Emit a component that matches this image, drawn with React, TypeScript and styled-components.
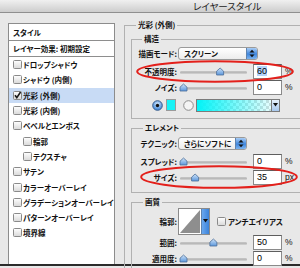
import React from 'react'
import styled, { createGlobalStyle } from 'styled-components'

const GlobalStyle = createGlobalStyle`
  html, body {
    margin: 0;
    padding: 0;
  }
  body {
    width: 300px;
    height: 268px;
    overflow: hidden;
    background: #e8e8e8;
    font-family: "Noto Sans CJK JP", "Liberation Sans", sans-serif;
    font-size: 7.5px;
    font-feature-settings: "palt";
    color: #111;
  }
`

const effects = [
  { name: 'ドロップシャドウ', indent: 0 },
  { name: 'シャドウ (内側)', indent: 0 },
  { name: '光彩 (外側)', indent: 0, checked: true },
  { name: '光彩 (内側)', indent: 0 },
  { name: 'ベベルとエンボス', indent: 0 },
  { name: '輪郭', indent: 10 },
  { name: 'テクスチャ', indent: 10 },
  { name: 'サテン', indent: 0 },
  { name: 'カラーオーバーレイ', indent: 0 },
  { name: 'グラデーションオーバーレイ', indent: 0 },
  { name: 'パターンオーバーレイ', indent: 0 },
  { name: '境界線', indent: 0 },
]

const CheckBox: React.FC<{ checked?: boolean }> = ({ checked }) => (
  <svg width="9" height="9" viewBox="0 0 9 9">
    <defs>
      <linearGradient id="cbg" x1="0" y1="0" x2="0" y2="1">
        <stop offset="0" stopColor="#ffffff" />
        <stop offset="1" stopColor="#d8d8d8" />
      </linearGradient>
    </defs>
    <rect x="0.5" y="0.5" width="8" height="8" rx="1" fill="url(#cbg)" stroke="#8a8a8a" />
    {checked && <path d="M2 4.2 L3.8 6.6 L7.6 1" fill="none" stroke="#1a1a1a" strokeWidth="1.6" />}
  </svg>
)

// pos: 0..1 along the track
const Slider: React.FC<{ pos: number }> = ({ pos }) => {
  const x = 1 + pos * 61
  return (
    <svg width="70" height="9" viewBox="0 0 70 9">
      <defs>
        <linearGradient id="thumb" x1="0" y1="0" x2="0" y2="1">
          <stop offset="0" stopColor="#cfe3f8" />
          <stop offset="1" stopColor="#5b97dc" />
        </linearGradient>
      </defs>
      <rect x="1" y="4.5" width="67" height="2" rx="1" fill="#9c9c9c" />
      <rect x="1" y="5.5" width="67" height="1" fill="#d6d6d6" />
      <polygon
        points={`${x},8 ${x},4.2 ${x + 3.5},1 ${x + 7},4.2 ${x + 7},8`}
        fill="url(#thumb)"
        stroke="#4b6d98"
        strokeWidth="0.8"
      />
    </svg>
  )
}

const Radio: React.FC<{ on?: boolean }> = ({ on }) => (
  <svg width="11" height="11" viewBox="0 0 11 11">
    <defs>
      <radialGradient id="rb" cx="0.5" cy="0.35" r="0.6">
        <stop offset="0" stopColor="#d6e8fb" />
        <stop offset="1" stopColor="#3f86d8" />
      </radialGradient>
    </defs>
    <circle cx="5.5" cy="5.5" r="4.8" fill={on ? 'url(#rb)' : '#f4f4f4'} stroke={on ? '#3a5e8c' : '#8d8d8d'} />
    {on && <circle cx="5.5" cy="5.5" r="1.7" fill="#111" />}
  </svg>
)

const Stepper = () => (
  <StepperBox>
    <svg width="6" height="9" viewBox="0 0 6 9">
      <polygon points="0.5,3.5 3,0.8 5.5,3.5" fill="#111" />
      <polygon points="0.5,5.5 3,8.2 5.5,5.5" fill="#111" />
    </svg>
  </StepperBox>
)

const DownArrow = () => (
  <svg width="5" height="4" viewBox="0 0 5 4">
    <polygon points="0,0 5,0 2.5,3.5" fill="#111" />
  </svg>
)

const Ellipse: React.FC<{ left: number; top: number; w: number; h: number }> = ({ left, top, w, h }) => (
  <Mark style={{ left, top }} width={w} height={h} viewBox={`0 0 ${w} ${h}`}>
    <ellipse cx={w / 2} cy={h / 2} rx={w / 2 - 1.2} ry={h / 2 - 1.2} fill="none" stroke="#e3201b" strokeWidth="2" />
  </Mark>
)

const SliderRow: React.FC<{ label: string; value: number; pos: number; unit: string; selected?: boolean }> = ({
  label,
  value,
  pos,
  unit,
  selected,
}) => (
  <Row $h={16}>
    <Label>{label}</Label>
    <SliderWrap>
      <Slider pos={pos} />
    </SliderWrap>
    <Field>{selected ? <Sel>{value}</Sel> : value}</Field>
    <Unit>{unit}</Unit>
  </Row>
)

export default function App() {
  return (
    <Window>
      <GlobalStyle />
      <TitleBar>レイヤースタイル</TitleBar>
      <Main>
        <StyleList>
          <ListHeader>スタイル</ListHeader>
          <ListHeader $h={16}>レイヤー効果: 初期設定</ListHeader>
          {effects.map((e) => (
            <ListItem key={e.name} $indent={e.indent} $selected={!!e.checked}>
              <CheckBox checked={e.checked} />
              <span>{e.name}</span>
            </ListItem>
          ))}
        </StyleList>

        <Outer>
          <Caption $ml={5}>光彩 (外側)</Caption>

          <Group>
            <Caption $ml={10}>構造</Caption>
            <Rows $pt={2} $pb={6}>
              <Row $h={14}>
                <Label>描画モード:</Label>
                <Select $w={80}>
                  <span>スクリーン</span>
                  <Stepper />
                </Select>
              </Row>
              <Gap $h={3} />
              <SliderRow label="不透明度:" value={60} pos={0.6} unit="%" selected />
              <SliderRow label="ノイズ:" value={0} pos={0} unit="%" />
              <Gap $h={3} />
              <Row $h={14}>
                <ColorPick>
                  <Radio on />
                  <Swatch />
                  <Radio />
                  <GradientBar>
                    <GradientArrow>
                      <DownArrow />
                    </GradientArrow>
                  </GradientBar>
                </ColorPick>
              </Row>
            </Rows>
          </Group>

          <Group>
            <Caption $ml={11}>エレメント</Caption>
            <Rows $pt={3} $pb={7}>
              <Row $h={14}>
                <Label>テクニック:</Label>
                <Select $w={69}>
                  <span>さらにソフトに</span>
                  <Stepper />
                </Select>
              </Row>
              <Gap $h={3} />
              <SliderRow label="スプレッド:" value={0} pos={0} unit="%" />
              <SliderRow label="サイズ:" value={35} pos={0.19} unit="px" />
            </Rows>
          </Group>

          <Group>
            <Caption $ml={11}>画質</Caption>
            <Rows $pt={1} $pb={4}>
              <Row $h={26}>
                <Label>輪郭:</Label>
                <Contour>
                  <svg width="22" height="25" viewBox="0 0 22 25">
                    <polygon points="1,24 21,1 21,24" fill="#8e8e8e" />
                  </svg>
                  <ContourStrip>
                    <DownArrow />
                  </ContourStrip>
                </Contour>
                <AntiAlias>
                  <CheckBox />
                  <span>アンチエイリアス</span>
                </AntiAlias>
              </Row>
              <SliderRow label="範囲:" value={50} pos={0.49} unit="%" />
              <SliderRow label="適用度:" value={0} pos={0} unit="%" />
            </Rows>
          </Group>
        </Outer>
      </Main>
      <Ellipse left={136} top={60} w={158} h={23} />
      <Ellipse left={140} top={165} w={158} h={24} />
    </Window>
  )
}

const Window = styled.div`
  position: relative;
  width: 300px;
  height: 268px;
  display: flex;
  flex-direction: column;
  overflow: hidden;
`

const TitleBar = styled.div`
  flex: none;
  height: 12px;
  line-height: 12px;
  padding-left: 193px;
  border-bottom: 1px solid #8f8f8f;
  background: linear-gradient(#f0f0f0, #cdcdcd);
  font-size: 9.5px;
  color: #222;
`

const Main = styled.div`
  flex: none;
  height: 253px;
  box-sizing: border-box;
  display: flex;
  align-items: flex-start;
  padding-left: 8px;
  border-bottom: 2px solid #2b2b2b;
`

const StyleList = styled.div`
  flex: none;
  width: 107px;
  height: 241px;
  margin-top: 10px;
  box-sizing: border-box;
  background: #fff;
  border: 1px solid #8c8c8c;
  border-bottom: none;
  font-weight: bold;
`

const ListHeader = styled.div<{ $h?: number }>`
  height: ${(p) => p.$h ?? 17}px;
  box-sizing: border-box;
  display: flex;
  align-items: center;
  padding-left: 4px;
  border-bottom: 1px solid #8e8e8e;
`

const ListItem = styled.div<{ $indent: number; $selected: boolean }>`
  height: 15.3px;
  display: flex;
  align-items: center;
  gap: 1px;
  padding-left: ${(p) => 4 + p.$indent}px;
  background: ${(p) => (p.$selected ? '#c8dbf5' : 'transparent')};
`

/* group boxes: a bordered box whose caption sits on the top line */
const Outer = styled.div`
  flex: none;
  width: 210px;
  margin: 12px 0 0 9px;
  padding-left: 6px;
  border: 1px solid #b1b1b1;
  font-weight: bold;
`

const Group = styled.div`
  margin-top: 9px;
  border: 1px solid #b1b1b1;
`

const Caption = styled.div<{ $ml: number }>`
  width: fit-content;
  margin: -6px 0 0 ${(p) => p.$ml}px;
  padding: 0 2px;
  height: 10px;
  line-height: 10px;
  background: #e8e8e8;
  white-space: nowrap;
`

const Rows = styled.div<{ $pt: number; $pb: number }>`
  display: flex;
  flex-direction: column;
  padding: ${(p) => p.$pt}px 0 ${(p) => p.$pb}px 2px;
`

const Gap = styled.div<{ $h: number }>`
  height: ${(p) => p.$h}px;
`

const Row = styled.div<{ $h: number }>`
  height: ${(p) => p.$h}px;
  display: flex;
  align-items: center;
`

const Label = styled.div`
  flex: none;
  width: 43px;
  text-align: right;
  white-space: nowrap;
`

const SliderWrap = styled.div`
  flex: none;
  margin-left: 2px;
  display: flex;
`

const Field = styled.div`
  flex: none;
  box-sizing: border-box;
  width: 29px;
  height: 15px;
  margin-left: 4px;
  padding-left: 3px;
  background: #fff;
  border: 1px solid #8a8a8a;
  border-top-color: #5e5e5e;
  font-family: "Liberation Sans", sans-serif;
  font-weight: normal;
  font-size: 9px;
  line-height: 13px;
  color: #000;
`

const Sel = styled.span`
  background: #b3d3fb;
`

const Unit = styled.div`
  margin-left: 3px;
  font-family: "Liberation Sans", sans-serif;
  font-weight: normal;
  font-size: 8.5px;
`

const Select = styled.div<{ $w: number }>`
  flex: none;
  box-sizing: border-box;
  width: ${(p) => p.$w}px;
  height: 13px;
  margin-left: 1px;
  display: flex;
  align-items: center;
  justify-content: space-between;
  padding-left: 5px;
  background: linear-gradient(#ffffff, #ececec);
  border: 1px solid #9a9a9a;
  border-radius: 3px;
  overflow: hidden;
`

const StepperBox = styled.div`
  width: 10px;
  height: 100%;
  display: flex;
  align-items: center;
  justify-content: center;
  background: linear-gradient(#a9cdf6, #3f86dc 55%, #7cb4f0);
  border-left: 1px solid #5d83b0;
`

const ColorPick = styled.div`
  display: flex;
  align-items: center;
  padding-left: 18px;
`

const Swatch = styled.div`
  width: 10px;
  height: 12px;
  margin: 0 7px 0 3px;
  box-sizing: border-box;
  background: #18f2f6;
  border: 1px solid #9a9a9a;
`

const GradientBar = styled.div`
  width: 84px;
  height: 13px;
  margin-left: 2px;
  box-sizing: border-box;
  border: 1px solid #7b7b7b;
  display: flex;
  justify-content: flex-end;
  background:
    linear-gradient(to right, #00f4f8, rgba(0, 244, 248, 0)),
    repeating-conic-gradient(#dcdcdc 0 25%, #ffffff 0 50%) 0 0 / 6px 6px;
`

const GradientArrow = styled.div`
  width: 7px;
  height: 100%;
  display: flex;
  align-items: center;
  justify-content: center;
  background: linear-gradient(#e7f1fc, #a8c8ee);
  border-left: 1px solid #7b7b7b;
`

const Contour = styled.div`
  flex: none;
  display: flex;
  height: 25px;
  margin-left: 1px;
  border: 1px solid #8a8a8a;
  background: #fff;
`

const ContourStrip = styled.div`
  width: 7px;
  display: flex;
  align-items: center;
  justify-content: center;
  background: linear-gradient(to right, #6aa8ef, #3b82d9);
  border-left: 1px solid #5d83b0;
`

const AntiAlias = styled.div`
  display: flex;
  align-items: center;
  gap: 2px;
  margin-left: 7px;
`

const Mark = styled.svg`
  position: absolute;
  pointer-events: none;
`
